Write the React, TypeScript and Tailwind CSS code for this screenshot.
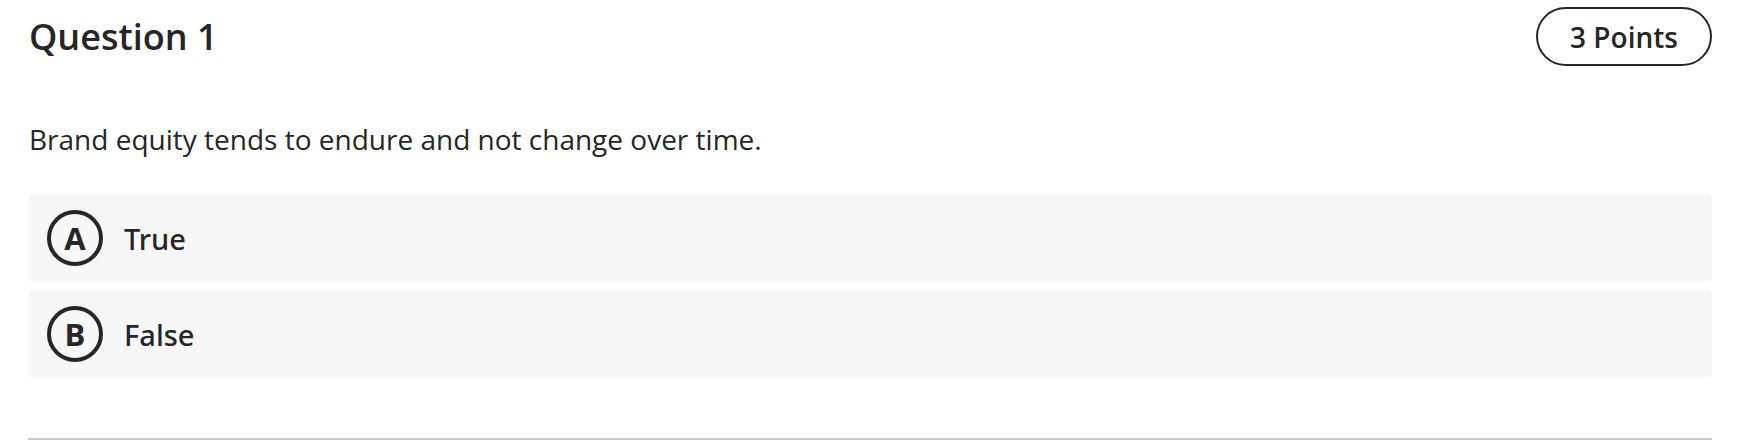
import React from "react";

const OPTIONS = [
  { key: "A", label: "True" },
  { key: "B", label: "False" },
];

export default function App() {
  return (
    <div
      className="min-h-[446px] bg-white pl-[28px] pr-[48px] pt-[7px] text-[#262626]"
      style={{ fontFamily: '"Open Sans", "Noto Sans", sans-serif' }}
    >
      <div className="flex h-[59px] items-center justify-between">
        <h2 className="pl-[1px] text-[36px] font-semibold leading-none">Question 1</h2>
        <span className="flex h-[59px] w-[176px] items-center justify-center rounded-full border-2 border-[#262626] text-[28px] font-semibold leading-none">
          3 Points
        </span>
      </div>

      <p className="mt-[55px] pl-[1px] text-[28px] leading-[36px]">
        Brand equity tends to endure and not change over time.
      </p>

      <ul className="mt-[37px] flex flex-col gap-[8px]">
        {OPTIONS.map((o) => (
          <li
            key={o.key}
            className="flex h-[88px] items-center gap-[21px] rounded-[5px] bg-[#f7f7f7] pl-[19px]"
          >
            <span className="flex h-[56px] w-[56px] items-center justify-center rounded-full border-4 border-[#262626] text-[31px] font-bold leading-none">
              {o.key}
            </span>
            <span className="font-['Noto_Sans',sans-serif] text-[29px] font-medium leading-none">
              {o.label}
            </span>
          </li>
        ))}
      </ul>

      <hr className="mt-[60px] border-t-2 border-[#c8c8c8]" />
    </div>
  );
}
